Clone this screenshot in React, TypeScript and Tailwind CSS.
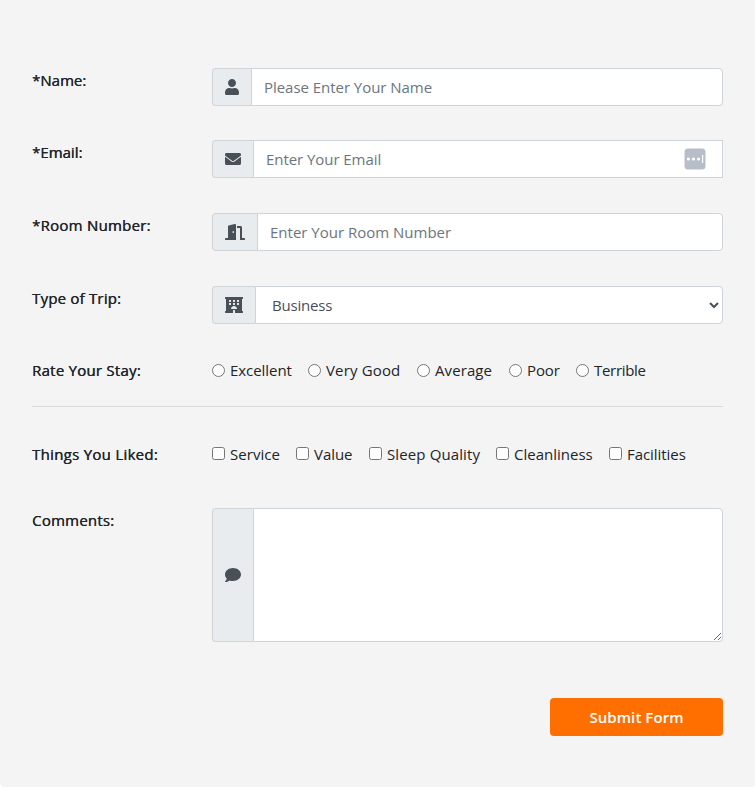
import type { ReactNode } from 'react';
import { FaComment, FaDoorOpen, FaEnvelope, FaHotel, FaUser } from 'react-icons/fa';

function Row({ label, labelClass, className, children }: { label: string; labelClass: string; className: string; children: ReactNode }) {
  return (
    <div className={`flex items-start ${className}`}>
      <div className="w-[180px] shrink-0">
        <span className={`block whitespace-nowrap leading-6 [text-shadow:0.3px_0_0_#212529] ${labelClass}`}>{label}</span>
      </div>
      <div className="flex min-w-0 flex-1">{children}</div>
    </div>
  );
}

function Addon({ children }: { children: ReactNode }) {
  return (
    <span className="flex shrink-0 items-center rounded-l border border-r-0 border-[#ced4da] bg-[#e9ecef] px-3 text-[#495057]">
      {children}
    </span>
  );
}

const field =
  'h-[38px] min-w-0 flex-1 border border-[#ced4da] bg-white px-3 text-[#495057] outline-none placeholder:text-[#6c757d] placeholder:opacity-100';

const ratings = [
  { name: 'Excellent', width: 'w-[96px]', track: 'tracking-[-0.05px]' },
  { name: 'Very Good', width: 'w-[109px]', track: 'tracking-[0.15px]' },
  { name: 'Average', width: 'w-[92px]', track: 'tracking-[0.1px]' },
  { name: 'Poor', width: 'w-[67px]', track: 'tracking-[-0.1px]' },
  { name: 'Terrible', width: 'w-[80px]', track: 'tracking-[-0.3px]' },
];

const likes = [
  { name: 'Service', width: 'w-[84px]', track: 'tracking-[0.05px]' },
  { name: 'Value', width: 'w-[73px]', track: 'tracking-[-0.05px]' },
  { name: 'Sleep Quality', width: 'w-[127px]', track: 'tracking-[0.12px]' },
  { name: 'Cleanliness', width: 'w-[113px]', track: 'tracking-[0px]' },
  { name: 'Facilities', width: 'w-[80px]', track: 'tracking-[-0.05px]' },
];

function Choices({ type, items }: { type: 'radio' | 'checkbox'; items: typeof ratings }) {
  return (
    <div className="flex h-6">
      {items.map((item) => (
        <label key={item.name} className={`flex shrink-0 gap-[5px] whitespace-nowrap leading-6 ${item.width}`}>
          <input type={type} name={type} className={`h-[13px] w-[13px] shrink-0 ${type === 'radio' ? 'mt-1.5' : 'mt-[5px]'}`} />
          <span className={item.track}>{item.name}</span>
        </label>
      ))}
    </div>
  );
}

export default function App() {
  return (
    <div className="h-[789px] bg-white">
      <form className="h-[787px] rounded-b bg-[#f4f4f4] px-8 pt-[68px] font-['Open_Sans','Noto_Sans',sans-serif] text-[15px] text-[#212529]">
        <Row label="*Name:" labelClass="" className="h-[72px]">
          <Addon><FaUser className="h-4 w-[14px]" /></Addon>
          <input className={`${field} rounded-r placeholder:tracking-[-0.04px]`} placeholder="Please Enter Your Name" />
        </Row>
        <Row label="*Email:" labelClass="" className="h-[73px]">
          <Addon><FaEnvelope className="h-4 w-4" /></Addon>
          <div className="flex h-[38px] flex-1 items-center border border-[#ced4da] bg-white pr-4">
            <input className="min-w-0 flex-1 px-3 outline-none placeholder:tracking-[-0.06px] placeholder:text-[#6c757d] placeholder:opacity-100" placeholder="Enter Your Email" />
            <svg className="h-[22px] w-[22px]" viewBox="0 0 22 22">
              <rect x="0.5" y="0.5" width="21" height="21" rx="3.5" fill="#b7bec9" />
              <circle cx="4.4" cy="11" r="1.6" fill="white" />
              <circle cx="9.5" cy="11" r="1.6" fill="white" />
              <circle cx="14.6" cy="11" r="1.6" fill="white" />
              <rect x="18" y="7" width="1.2" height="8" fill="white" />
            </svg>
          </div>
        </Row>
        <Row label="*Room Number:" labelClass="tracking-[0.25px]" className="h-[73px]">
          <Addon><FaDoorOpen className="h-4 w-5" /></Addon>
          <input className={`${field} rounded-r`} placeholder="Enter Your Room Number" />
        </Row>
        <Row label="Type of Trip:" labelClass="tracking-[0.2px]" className="h-[72px]">
          <Addon><FaHotel className="h-4 w-[18px]" /></Addon>
          <select className="h-[38px] min-w-0 flex-1 rounded-r border border-[#ced4da] bg-white pl-3 tracking-[-0.2px] text-[#495057]">
            <option>Business</option>
            <option>Vacation</option>
          </select>
        </Row>
        <Row label="Rate Your Stay:" labelClass="tracking-[0.24px]" className="h-12">
          <Choices type="radio" items={ratings} />
        </Row>
        <hr className="border-[#d9d9d9]" />
        <Row label="Things You Liked:" labelClass="tracking-[0.28px]" className="mt-[35px] h-[66px]">
          <Choices type="checkbox" items={likes} />
        </Row>
        <Row label="Comments:" labelClass="tracking-[0.22px]" className="h-[190px]">
          <Addon><FaComment className="h-4 w-4" /></Addon>
          <textarea className="block h-[134px] min-w-0 flex-1 resize rounded-r border border-[#ced4da] bg-white px-3 py-1.5 outline-none" />
        </Row>
        <div className="flex justify-end">
          <button type="button" className="h-[38px] w-[173px] rounded bg-[#ff6f00] font-semibold tracking-[0.08px] text-white">Submit Form</button>
        </div>
      </form>
    </div>
  );
}
